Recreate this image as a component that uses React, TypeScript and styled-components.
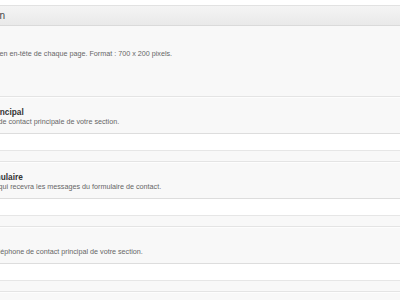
import styled, { createGlobalStyle } from "styled-components";

const GlobalStyle = createGlobalStyle`
  html, body {
    margin: 0;
    padding: 0;
    background: #ffffff;
    overflow: hidden;
  }
  body {
    font-family: "Liberation Sans", Arial, sans-serif;
  }
`;

const Page = styled.div`
  width: 400px;
  height: 300px;
  overflow: hidden;
  padding-top: 5px;
  box-sizing: border-box;
`;

const Panel = styled.div`
  margin-left: -45px;
  width: 460px;
  background-color: #f8f8f8;
  border-top: 1px solid #e2e2e2;
`;

const PanelHeader = styled.div`
  height: 19px;
  display: flex;
  align-items: center;
  background: linear-gradient(to bottom, #f4f4f4, #e9e9e9);
  border-bottom: 1px solid #dadada;
  font-size: 10px;
  color: #464646;
`;

const Row = styled.div<{ $first?: boolean }>`
  padding: ${(p) => (p.$first ? "13px 0 0" : "10px 0 10px")};
  height: ${(p) => (p.$first ? "57px" : "auto")};
  border-top: ${(p) => (p.$first ? "none" : "1px solid #e4e4e4")};
  box-shadow: ${(p) => (p.$first ? "none" : "inset 0 1px 0 #fdfdfd")};
`;

const Label = styled.div`
  font-size: 8.3px;
  line-height: 10px;
  font-weight: bold;
  color: #333333;
`;

const Hint = styled.div`
  font-size: 7.2px;
  line-height: 10px;
  color: #666666;
`;

const Field = styled.div`
  margin-top: 6px;
  height: 16px;
  background-color: #ffffff;
  border-top: 1px solid #dddddd;
  border-bottom: 1px solid #e6e6e6;
`;

type Setting = {
  label: string;
  hint: string;
};

const settings: Setting[] = [
  {
    label: "Courriel principal",
    hint: "Adresse mail de contact principale de votre section.",
  },
  {
    label: "E-mail formulaire",
    hint: "Adresse mail qui recevra les messages du formulaire de contact.",
  },
  {
    label: "Tél.",
    hint: "Numéro de téléphone de contact principal de votre section.",
  },
];

export default function App() {
  return (
    <Page>
      <GlobalStyle />
      <Panel>
        <PanelHeader>Description</PanelHeader>
        <Row $first>
          <Label>Bannière</Label>
          <Hint>
            Visuel affiché en en-tête de chaque page. Format : 700 x 200 pixels.
          </Hint>
        </Row>
        {settings.map((s) => (
          <Row key={s.label}>
            <Label>{s.label}</Label>
            <Hint>{s.hint}</Hint>
            <Field />
          </Row>
        ))}
        <Row />
      </Panel>
    </Page>
  );
}
